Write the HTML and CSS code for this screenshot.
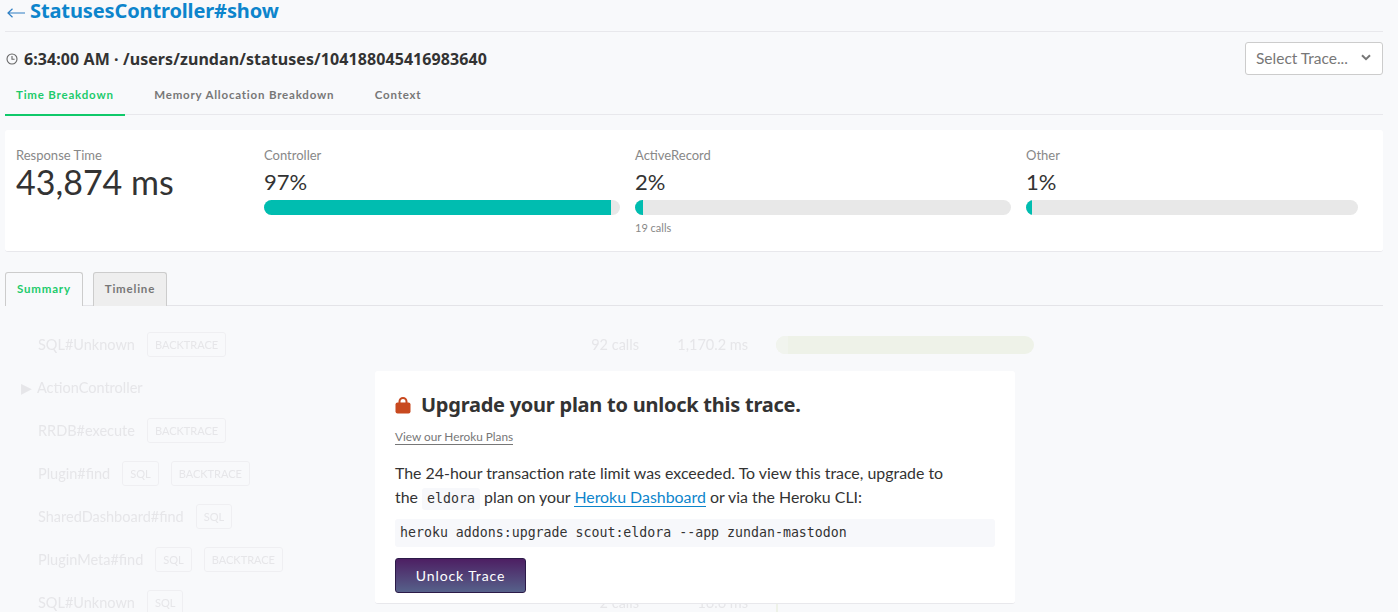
FILE: index.html
```html
<!DOCTYPE html>
<html lang="en">
<head>
  <meta charset="UTF-8" />
  <title>StatusesController#show</title>
  <link rel="stylesheet" href="styles.css">
</head>
<body>
  <div class="page">
    <h1 class="title"><a href="#">
      <svg class="back" width="18" height="10" viewBox="0 0 18 10"><path d="M18 5H1M5.5 .8L1 5l4.5 4.2" fill="none" stroke="#2f7fc4" stroke-width="1.2"/></svg>StatusesController#show</a></h1>

    <div class="trace-head">
      <h2 class="trace-name">
        <svg class="clock" width="12" height="12" viewBox="0 0 12 12"><circle cx="6" cy="6" r="5" fill="none" stroke="#666" stroke-width="1.1"/><path d="M6 3v3.2h2.6" fill="none" stroke="#666" stroke-width="1.1"/></svg>
        6:34:00 AM · /users/zundan/statuses/104188045416983640
      </h2>
      <div class="select">Select Trace...
        <svg width="10" height="7" viewBox="0 0 10 7"><path d="M1 1.2l4 4 4-4" fill="none" stroke="#777" stroke-width="2"/></svg>
      </div>
    </div>

    <nav class="tabs">
      <a class="tab active" href="#">Time Breakdown</a>
      <a class="tab" href="#">Memory Allocation Breakdown</a>
      <a class="tab" href="#">Context</a>
    </nav>

    <section class="card">
      <div class="stat stat-main">
        <div class="label">Response Time</div>
        <div class="big">43,874 ms</div>
      </div>
      <div class="stat stat-controller">
        <div class="label">Controller</div>
        <div class="pct">97%</div>
        <div class="bar"><div class="fill" style="width: 97.5%"></div></div>
      </div>
      <div class="stat stat-ar">
        <div class="label">ActiveRecord</div>
        <div class="pct">2%</div>
        <div class="bar"><div class="fill" style="width: 2%"></div></div>
        <div class="calls">19 calls</div>
      </div>
      <div class="stat stat-other">
        <div class="label">Other</div>
        <div class="pct">1%</div>
        <div class="bar"><div class="fill" style="width: 1%"></div></div>
      </div>
    </section>

    <div class="subtabs">
      <a class="subtab active" href="#">Summary</a>
      <a class="subtab" href="#">Timeline</a>
    </div>

    <div class="rows">
      <div class="row">
        <div class="name"><span>SQL#Unknown</span><span class="tag">BACKTRACE</span></div>
        <div class="num">92 calls</div>
        <div class="time">1,170.2 ms</div>
        <div class="rowbar"><div class="rowfill" style="width: 4.5%"></div></div>
      </div>
      <div class="row">
        <div class="name toggle"><span class="arrow">▶</span><span>ActionController</span></div>
      </div>
      <div class="row">
        <div class="name"><span>RRDB#execute</span><span class="tag">BACKTRACE</span></div>
      </div>
      <div class="row">
        <div class="name"><span>Plugin#find</span><span class="tag">SQL</span><span class="tag">BACKTRACE</span></div>
      </div>
      <div class="row">
        <div class="name"><span>SharedDashboard#find</span><span class="tag">SQL</span></div>
      </div>
      <div class="row">
        <div class="name"><span>PluginMeta#find</span><span class="tag">SQL</span><span class="tag">BACKTRACE</span></div>
      </div>
      <div class="row">
        <div class="name"><span>SQL#Unknown</span><span class="tag">SQL</span></div>
        <div class="num">2 calls</div>
        <div class="time">16.6 ms</div>
        <div class="rowbar thin"></div>
      </div>
    </div>
  </div>

  <div class="upgrade">
    <h3 class="upgrade-title">
      <svg width="16" height="17" viewBox="0 0 16 17"><path d="M4.5 6V4.5a3.5 3.5 0 0 1 7 0V6" fill="none" stroke="#c8491f" stroke-width="2"/><rect x="0.5" y="5.5" width="15" height="11" rx="2" fill="#c8491f"/></svg>
      Upgrade your plan to unlock this trace.
    </h3>
    <a class="plans" href="#">View our Heroku Plans</a>
    <p class="upgrade-text">
      <span class="line">The 24-hour transaction rate limit was exceeded. To view this trace, upgrade to</span>
      <span class="line">the <code>eldora</code> plan on your <a href="#">Heroku Dashboard</a> or via the Heroku CLI:</span>
    </p>
    <pre class="cmd">heroku addons:upgrade scout:eldora --app zundan-mastodon</pre>
    <button class="unlock">Unlock Trace</button>
  </div>
</body>
</html>
```

FILE: styles.css
```css
html, body {
  height: 612px;
  overflow: hidden;
}

body {
  margin: 0;
  position: relative;
  background: #f8f9fb;
  color: #333;
  font-family: Lato, sans-serif;
}

a {
  text-decoration: none;
}

.page {
  padding: 0 15px 0 5px;
}

.title {
  box-sizing: border-box;
  margin: 0;
  height: 32px;
  padding-top: 1px;
  border-bottom: 1px solid #e8e8ec;
  font-family: "Noto Sans", sans-serif;
  font-size: 20px;
  font-weight: 700;
  line-height: 20px;
  letter-spacing: -0.12px;
}

.title a {
  color: #0d85cc;
}

.back {
  margin: 0 5px 0 2px;
}

.trace-head {
  display: flex;
  justify-content: space-between;
  align-items: center;
  height: 53px;
}

.trace-name {
  margin: 0;
  display: flex;
  align-items: center;
  gap: 6px;
  padding-left: 1px;
  font-family: "Noto Sans", sans-serif;
  font-size: 16px;
  font-weight: 700;
  letter-spacing: 0.08px;
}

.select {
  display: flex;
  align-items: center;
  justify-content: space-between;
  box-sizing: border-box;
  width: 138px;
  height: 33px;
  padding: 0 11px 2px 10px;
  background: #fff;
  border: 1px solid #ccc;
  border-radius: 3px;
  color: #777;
  font-size: 15.5px;
}

.tabs {
  display: flex;
  height: 29px;
  border-bottom: 1px solid #e8e8ec;
}

.tab {
  padding: 3px 11px 0;
  margin-right: 18.5px;
  height: 26px;
  color: #777;
  font-size: 11.5px;
  font-weight: 700;
  letter-spacing: 0.8px;
}

.active.tab {
  color: #1ccb6b;
  border-bottom: 2px solid #10c96a;
}

.card {
  display: flex;
  box-sizing: border-box;
  height: 122px;
  margin-top: 15px;
  padding: 18px 0 0 11px;
  background: #fff;
  border-bottom: 1px solid #e8e8ec;
  border-radius: 3px;
}

.stat-main {
  width: 248px;
}

.stat-controller {
  width: 356px;
  margin-right: 15px;
}

.stat-ar {
  width: 376px;
  margin-right: 15px;
}

.stat-other {
  width: 332px;
}

.label {
  color: #888;
  font-size: 13px;
  line-height: 15px;
}

.big {
  font-size: 34px;
  line-height: 38px;
  color: #333;
}

.pct {
  margin-top: 6px;
  font-size: 22px;
  line-height: 26px;
}

.bar {
  margin-top: 5px;
  height: 15px;
  background: #e8e8e8;
  border-radius: 8px;
  overflow: hidden;
}

.fill {
  height: 100%;
  min-width: 6px;
  background: #00bdb0;
}

.calls {
  margin-top: 6px;
  color: #888;
  font-size: 11px;
}

.subtabs {
  display: flex;
  gap: 10px;
  height: 33px;
  margin-top: 20px;
  border-bottom: 1px solid #e4e4e8;
}

.subtab {
  box-sizing: border-box;
  height: 34px;
  padding: 9px 11px 0;
  background: #eee;
  border: 1px solid #ccc;
  border-bottom: none;
  border-radius: 3px 3px 0 0;
  color: #777;
  font-size: 11.5px;
  font-weight: 700;
  letter-spacing: 0.8px;
}

.active.subtab {
  background: #f8f9fb;
  color: #1ccb6b;
}

.rows {
  margin-top: 17px;
  color: #e6e6e9;
  filter: blur(0.5px);
}

.row {
  display: flex;
  align-items: center;
  height: 43px;
  font-size: 14.5px;
}

.name {
  display: flex;
  align-items: center;
  gap: 12px;
  padding-left: 33px;
  width: 487px;
}

.name.toggle {
  padding-left: 16px;
  gap: 5px;
}

.arrow {
  font-size: 14px;
}

.tag {
  padding: 4px 7px;
  border: 1px solid #efeff2;
  border-radius: 3px;
  font-size: 11px;
  line-height: 15px;
}

.num {
  width: 114px;
  text-align: right;
}

.time {
  width: 109px;
  text-align: right;
}

.rowbar {
  width: 258px;
  height: 18px;
  margin-left: 28px;
  background: #eef2e8;
  border-radius: 9px;
  overflow: hidden;
}

.rowbar.thin {
  width: 2px;
  height: 43px;
  border-radius: 0;
}

.rowfill {
  height: 100%;
  background: #f1f4ee;
}

.upgrade {
  position: absolute;
  left: 375px;
  top: 371px;
  box-sizing: border-box;
  width: 640px;
  height: 233px;
  padding: 20px 20px 0;
  background: #fff;
  border-bottom: 1px solid #e8e8ec;
  border-radius: 3px;
}

.upgrade-title {
  display: flex;
  align-items: center;
  gap: 10px;
  margin: 0;
  font-family: "Noto Sans", sans-serif;
  font-size: 20px;
  font-weight: 700;
  line-height: 28px;
  letter-spacing: -0.25px;
}

.plans {
  display: inline-block;
  margin-top: 11px;
  color: #777;
  font-size: 11.8px;
  line-height: 14px;
  border-bottom: 1px solid #777;
}

.upgrade-text {
  margin: 16px 0 0;
  font-size: 15.9px;
  line-height: 24px;
}

.line {
  display: block;
}

.upgrade-text a {
  color: #0d85cc;
  border-bottom: 1px solid #0d85cc;
}

code {
  display: inline-block;
  padding: 0 5px;
  background: #f7f8fb;
  border-radius: 3px;
  font-family: "DejaVu Sans Mono", monospace;
  font-size: 13.25px;
  line-height: 22px;
}

.cmd {
  margin: 9px 0 0;
  height: 28px;
  padding: 0 5px;
  background: #f7f8fb;
  border-radius: 3px;
  font-family: "DejaVu Sans Mono", monospace;
  font-size: 13.25px;
  line-height: 28px;
}

.unlock {
  display: block;
  width: 131px;
  height: 35px;
  margin-top: 11px;
  background: linear-gradient(#4d1f63, #56618a);
  border: 1px solid #2b1a48;
  border-radius: 3px;
  color: #fff;
  font-family: Lato, sans-serif;
  font-size: 14px;
  letter-spacing: 0.9px;
}
```
